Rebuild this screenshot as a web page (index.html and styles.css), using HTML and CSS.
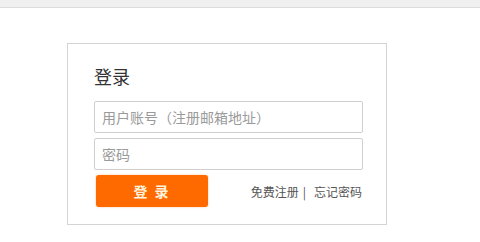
FILE: index.html
```html
<!DOCTYPE html>
<html>
<head>
<meta charset="utf-8">
<link rel="stylesheet" href="styles.css">
</head>
<body>
<div class="topbar"></div>
<div class="page">
  <div class="card">
    <h2 class="title">登录</h2>
    <input class="field" type="text" placeholder="用户账号（注册邮箱地址）">
    <input class="field" type="password" placeholder="密码">
    <div class="actions">
      <button class="btn">登 录</button>
      <div class="links"><a>免费注册</a><span class="sep">|</span><a>忘记密码</a></div>
    </div>
  </div>
</div>
</body>
</html>
```
FILE: styles.css
```css
html, body {
  margin: 0;
  padding: 0;
  background: #fff;
  font-family: "Noto Sans CJK SC", sans-serif;
}
.topbar {
  height: 7px;
  background: #f0f0f0;
  border-bottom: 1px solid #dcdcdc;
}
.page {
  padding: 35px 0 0 67px;
}
.card {
  box-sizing: border-box;
  width: 320px;
  height: 182px;
  border: 1px solid #d4d4d4;
  padding: 19px 23px 0 26px;
}
.title {
  margin: 0 0 12px 0;
  font-size: 18px;
  font-weight: normal;
  color: #333;
  line-height: 26px;
}
.field {
  display: block;
  box-sizing: border-box;
  width: 269px;
  height: 32px;
  margin: 0 0 5px 0;
  padding: 0 7px;
  border: 1px solid #cfcfcf;
  border-radius: 2px;
  font-family: "Noto Sans CJK SC", sans-serif;
  font-size: 14px;
  color: #333;
  outline: none;
}
.field::placeholder {
  color: #9a9a9a;
}
.actions {
  display: flex;
  align-items: center;
  justify-content: space-between;
  width: 269px;
}
.btn {
  width: 112px;
  height: 32px;
  margin-left: 2px;
  border: none;
  border-radius: 3px;
  background: #ff6a00;
  color: #fff3dc;
  font-family: "Noto Sans CJK SC", sans-serif;
  font-size: 14px;
  font-weight: bold;
  letter-spacing: 2px;
  box-shadow: 0 0 2px rgba(255, 150, 60, 0.6);
}
.links {
  font-family: "Noto Sans CJK SC", sans-serif;
  font-size: 12px;
  color: #555;
  display: flex;
  align-items: center;
  margin-right: 1px;
}
.links a {
  color: #555;
}
.sep {
  margin: 0 8px 0 4px;
}
```
